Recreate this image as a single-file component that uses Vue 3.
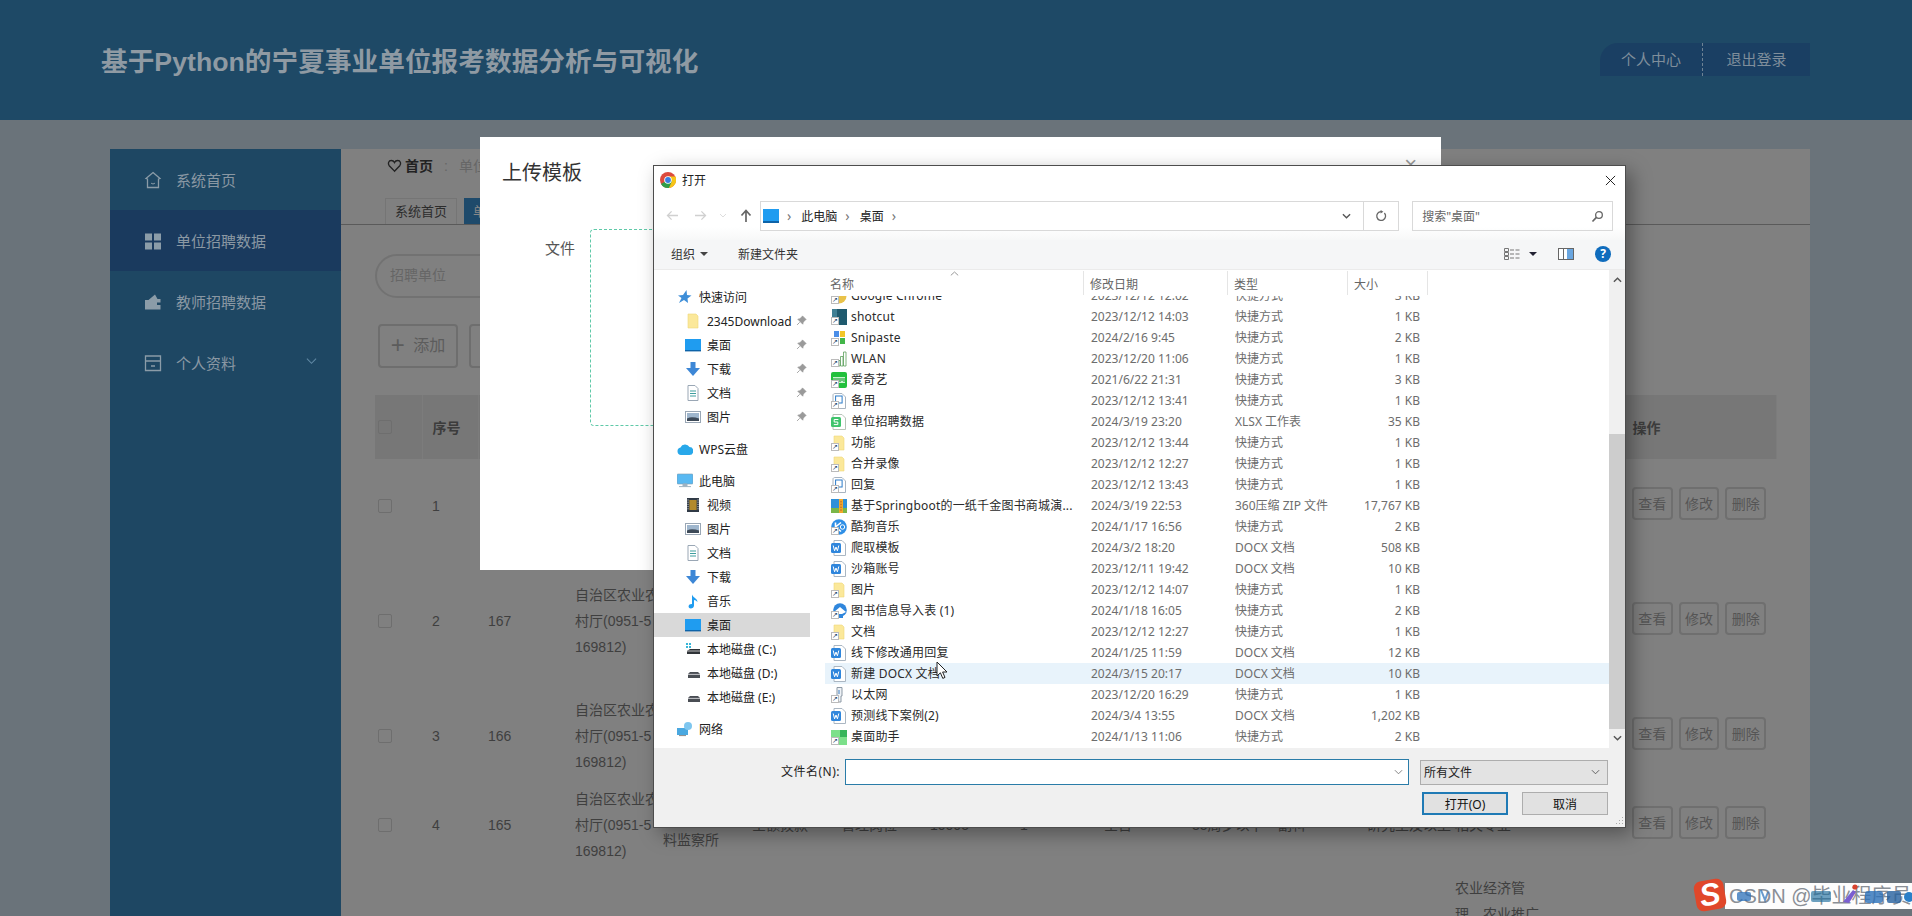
<template>
  <div class="page">
    <header class="top">
      <h1>基于Python的宁夏事业单位报考数据分析与可视化</h1>
      <div class="top-links">
        <span class="link first">个人中心</span>
        <span class="link">退出登录</span>
      </div>
    </header>

    <div class="main">
      <aside class="side">
        <div v-for="m in menu" :key="m.label" class="side-item" :class="{ active: m.active }">
          <svg class="side-icon" viewBox="0 0 18 18" v-html="sideIcons[m.icon]"></svg>
          <span>{{ m.label }}</span>
          <svg v-if="m.sub" class="side-arrow" viewBox="0 0 12 8"><path d="M1 1.5 6 6.5 11 1.5" fill="none" stroke="#5f87a3" stroke-width="1.2" /></svg>
        </div>
      </aside>

      <section class="content">
        <div class="crumb">
          <svg class="heart" viewBox="0 0 16 16"><path d="M8 14 2.4 8.2C.6 6.2 1.6 2.6 4.6 2.6 6.2 2.6 7.4 3.6 8 4.8 8.6 3.6 9.8 2.6 11.4 2.6c3 0 4 3.6 2.2 5.6Z" fill="none" stroke="#222" stroke-width="1.5" /></svg>
          <b>首页</b>
          <span class="crumb-sep">:</span>
          <span class="crumb-now">单位招聘数据</span>
        </div>
        <div class="tabs">
          <span class="tab">系统首页</span>
          <span class="tab on">单位招聘数据</span>
        </div>
        <div class="search"><span>招聘单位</span></div>
        <div class="tools">
          <button class="tool"><i>+</i> 添加</button>
          <button class="tool"></button>
        </div>

        <table class="grid">
          <colgroup>
            <col v-for="(w, i) in colWidths" :key="i" :style="{ width: w + 'px' }" />
          </colgroup>
          <thead>
            <tr>
              <th class="cb-cell"><span class="cb"></span></th>
              <th v-for="(h, i) in heads" :key="i">{{ h }}</th>
            </tr>
          </thead>
          <tbody>
            <tr v-for="r in rows" :key="r.key" :style="{ height: r.h + 'px' }" :class="r.cls">
              <td class="cb-cell"><span v-if="r.no" class="cb"></span></td>
              <td>{{ r.no }}</td>
              <td>{{ r.id }}</td>
              <td><span v-for="l in r.dept" :key="l" class="ln">{{ l }}</span></td>
              <td class="unit-cell"><span v-for="l in r.unit" :key="l" class="ln">{{ l }}</span></td>
              <td v-for="(c, i) in r.cells" :key="i"><span v-for="l in c.split('|')" :key="l" class="ln">{{ l }}</span></td>
              <td>
                <div v-if="r.no" class="ops">
                  <button>查看</button><button>修改</button><button>删除</button>
                </div>
              </td>
            </tr>
          </tbody>
        </table>
      </section>
    </div>

    <!-- page upload dialog -->
    <div class="upload">
      <h3>上传模板</h3>
      <span class="upload-x">×</span>
      <div class="upload-form">
        <label>文件</label>
        <div class="drop"></div>
      </div>
    </div>

    <!-- windows file picker -->
    <div class="picker">
      <div class="p-title">
        <svg class="chrome" viewBox="0 0 16 16">
          <circle cx="8" cy="8" r="8" fill="#dd4b3e" />
          <path d="M8 8 1 12A8 8 0 0 0 9 15.9L12.5 9Z" fill="#2f9e48" />
          <path d="M8 4.4h7.4A8 8 0 0 1 9 15.9L12 9Z" fill="#f5c518" />
          <circle cx="8" cy="8" r="3.8" fill="#fff" />
          <circle cx="8" cy="8" r="2.9" fill="#3a7de0" />
        </svg>
        <span>打开</span>
        <svg class="p-close" viewBox="0 0 12 12"><path d="M1 1 11 11M11 1 1 11" stroke="#111" stroke-width="1" /></svg>
      </div>

      <div class="p-addr">
        <svg class="nav-btn" viewBox="0 0 14 12"><path d="M13 6H2M6 1.5 1.5 6 6 10.5" fill="none" stroke="#d0d0d0" stroke-width="1.4" /></svg>
        <svg class="nav-btn" viewBox="0 0 14 12"><path d="M1 6H12M8 1.5 12.5 6 8 10.5" fill="none" stroke="#d0d0d0" stroke-width="1.4" /></svg>
        <svg class="nav-drop" viewBox="0 0 8 5"><path d="M1 1 4 4 7 1" fill="none" stroke="#ddd" /></svg>
        <svg class="nav-up" viewBox="0 0 12 14"><path d="M6 13V2M1.5 6.5 6 1.5 10.5 6.5" fill="none" stroke="#666" stroke-width="1.7" /></svg>
        <div class="addr-box">
          <span class="addr-pc"></span>
          <i class="chev">›</i><span>此电脑</span><i class="chev">›</i><span>桌面</span><i class="chev">›</i>
          <svg class="addr-down" viewBox="0 0 10 6"><path d="M1 1 5 5 9 1" fill="none" stroke="#555" stroke-width="1.5" /></svg>
          <span class="addr-refresh">
            <svg viewBox="0 0 12 12"><path d="M9.4 3A4.4 4.4 0 1 1 6 1.6" fill="none" stroke="#666" stroke-width="1.3" /><path d="M5.6 0 8.4 1.7 5.6 3.4Z" fill="#666" /></svg>
          </span>
        </div>
        <div class="search-box">
          <span>搜索"桌面"</span>
          <svg viewBox="0 0 14 14"><circle cx="8.6" cy="5.4" r="3.6" fill="none" stroke="#666" stroke-width="1.4" /><path d="M5.8 8 1.6 12.4" stroke="#666" stroke-width="1.8" /></svg>
        </div>
      </div>

      <div class="p-bar">
        <span>组织</span><i class="tri"></i>
        <span class="new-dir">新建文件夹</span>
        <svg class="view-ic" viewBox="0 0 16 12"><path d="M.5.5h4v3h-4zM.5 4.5h4v3h-4zM.5 8.5h4v3h-4z" fill="none" stroke="#777" /><path d="M6 2h4M11.5 2h4M6 6h4M11.5 6h4M6 10h4M11.5 10h4" stroke="#777" /></svg>
        <i class="tri dark"></i>
        <svg class="pane-ic" viewBox="0 0 16 12"><rect x=".5" y=".5" width="15" height="11" fill="#fff" stroke="#666" /><rect x="9" y="1" width="6" height="10" fill="#6aa6e0" /><path d="M5.5 1v10" stroke="#666" /></svg>
        <span class="help">?</span>
      </div>

      <div class="p-body">
        <nav class="p-nav">
          <div
            v-for="n in navItems"
            :key="n.key"
            class="nav-row"
            :class="{ group: n.group, sel: n.sel, gap: n.gap }"
          >
            <svg class="fi" viewBox="0 0 16 16" v-html="fileIcons[n.icon]"></svg>
            <span>{{ n.label }}</span>
            <svg v-if="n.pin" class="pin" viewBox="0 0 12 12"><path d="M7 1 11 5 9.6 5.6 7.6 8.4 7.4 10 2 4.6 3.6 4.4 6.4 2.4ZM4 8 1.2 10.8" fill="#9a9a9a" stroke="#9a9a9a" /></svg>
          </div>
        </nav>

        <div class="p-list">
          <div class="l-head">
            <span>名称</span><span>修改日期</span><span>类型</span><span>大小</span>
            <svg class="sort" viewBox="0 0 9 5"><path d="M.8 4.4 4.5 1 8.2 4.4" fill="none" stroke="#999" /></svg>
          </div>
          <div class="l-rows">
            <div v-for="f in files" :key="f.name" class="l-row" :class="{ hover: f.hover }">
              <span class="l-name">
                <span class="ic-wrap">
                  <svg class="fi" viewBox="0 0 16 16" v-html="fileIcons[f.icon]"></svg>
                  <i v-if="f.link" class="lnk">↗</i>
                </span>
                <span class="nm">{{ f.name }}</span>
              </span>
              <span>{{ f.date }}</span>
              <span>{{ f.type }}</span>
              <span class="sz">{{ f.size }}</span>
            </div>
          </div>
          <svg class="cursor" viewBox="0 0 12 19"><path d="M1 1V15L4.4 11.8 6.8 17.4 9 16.4 6.6 11H11Z" fill="#fff" stroke="#222" /></svg>
        </div>

        <div class="p-scroll">
          <svg viewBox="0 0 10 6"><path d="M1 5 5 1 9 5" fill="none" stroke="#555" stroke-width="1.6" /></svg>
          <div class="thumb"></div>
          <svg viewBox="0 0 10 6"><path d="M1 1 5 5 9 1" fill="none" stroke="#555" stroke-width="1.6" /></svg>
        </div>
      </div>

      <div class="p-foot">
        <div class="foot-row">
          <label>文件名(N):</label>
          <div class="name-input">
            <svg viewBox="0 0 10 6"><path d="M1 1 5 5 9 1" fill="none" stroke="#777" /></svg>
          </div>
          <div class="type-select">
            <span>所有文件</span>
            <svg viewBox="0 0 10 6"><path d="M1 1 5 5 9 1" fill="none" stroke="#555" /></svg>
          </div>
        </div>
        <div class="foot-btns">
          <button class="primary">打开(O)</button>
          <button>取消</button>
        </div>
        <svg class="grip" viewBox="0 0 10 10"><path d="M8 1h1v1H8zM5 4h1v1H5zM8 4h1v1H8zM2 7h1v1H2zM5 7h1v1H5zM8 7h1v1H8z" fill="#aaa" /></svg>
      </div>
    </div>

    <!-- video watermark and IME bar -->
    <div class="mark">
      <span class="s-logo">S</span>
      <div class="mark-band">
        <span class="mark-text">CSDN @毕业程序员</span>
        <svg class="mark-ime" viewBox="0 0 187 26">
          <rect x="12" y="9" width="14" height="9" rx="2" fill="#2a6fb8" opacity=".75" />
          <path d="M36 7 40 17 43 9" fill="none" stroke="#2a6fb8" stroke-width="2" opacity=".7" />
          <rect x="86" y="8" width="20" height="11" rx="2" fill="#1f6f9e" opacity=".65" />
          <path d="M118 19 128 7 131 9 124 20Z" fill="#7a5fd0" />
          <circle cx="130" cy="4" r="2.6" fill="#d8432f" />
          <rect x="140" y="8" width="18" height="12" rx="3" fill="#2a6fb8" opacity=".8" />
          <rect x="162" y="8" width="14" height="12" rx="2" fill="#245f9e" opacity=".8" />
          <circle cx="184" cy="14" r="5" fill="#2a7fc8" />
        </svg>
      </div>
    </div>
  </div>
</template>

<script setup>
// everything behind the dialogs is coloured as it looks under the grey modal mask
const menu = [
  { label: '系统首页', icon: 'home' },
  { label: '单位招聘数据', icon: 'grid', active: true },
  { label: '教师招聘数据', icon: 'case' },
  { label: '个人资料', icon: 'card', sub: true },
]

const sideIcons = {
  home: '<path d="M9 1.5 16 7.5 14.5 8V16.5H3.5V8L2 7.5Z" fill="none" stroke="#8b9ca8" stroke-width="1.3"/><path d="M7 12c1 1.2 3 1.2 4 0" fill="none" stroke="#8b9ca8"/>',
  grid: '<path d="M1 1.5h7v7H1zM10 1.5h7v7h-7zM1 10.5h7v7H1zM10 10.5h7v7h-7z" fill="#8b9ca8"/>',
  case: '<path d="M1 7h3.5L11 1.5 13.5 6 16.5 6V9.5H13V12H16.5V16.5H1Z" fill="#8b9ca8"/>',
  card: '<path d="M1.5 2H16.5V16.5H1.5ZM1.5 7H16.5M7 12H11" fill="none" stroke="#8b9ca8" stroke-width="1.3"/>',
}

const colWidths = [47, 56, 87, 88, 89, 89, 89, 90, 84, 88, 86, 89, 88, 88, 89, 154]
// only the visible heads are named, the rest sit under the dialogs
const heads = ['序号', '', '', '', '', '', '', '', '', '', '', '', '', '', '操作']

const rows = [
  { key: 1, no: 1, id: '', h: 86, cls: 'first', dept: [], unit: [], cells: [] },
  { key: 2, no: 2, id: 167, h: 152, dept: ['自治区农业农', '村厅(0951-5', '169812)'], unit: [], cells: [] },
  { key: 3, no: 3, id: 166, h: 78, dept: ['自治区农业农', '村厅(0951-5', '169812)'], unit: [], cells: [] },
  {
    key: 4,
    no: 4,
    id: 165,
    h: 100,
    dept: ['自治区农业农', '村厅(0951-5', '169812)'],
    unit: ['', '\u00a0', '料监察所'],
    cells: ['全额拨款', '管理岗位', '10005', '1', '全日', '35周岁以下', '副科', '研究生及以上', '相关专业'],
  },
  {
    key: 5,
    no: '',
    id: '',
    h: 180,
    cls: 'tall',
    dept: [],
    unit: [],
    cells: ['', '', '', '', '', '', '', '', '农业经济管|理、农业推广'],
  },
]
rows.forEach((r) => {
  while (r.cells.length < 10) r.cells.push('')
})

const fileIcons = {
  folder: '<path d="M3 1H11L13 3V15H3Z" fill="#fbe89a" stroke="#eed67a" stroke-width=".6"/>',
  desk: '<rect x="0" y="2" width="16" height="12" fill="#1f9cf0"/><path d="M0 13h16v1.4H0z" fill="#0d63a8"/>',
  down: '<path d="M5.5 1H10.5V7H15L8 15 1 7H5.5Z" fill="#3d87d6"/>',
  doc: '<path d="M3 .5H10L13 3.5V15.5H3Z" fill="#fff" stroke="#9aa7b5"/><path d="M5 6h6M5 8.5h6M5 11h6" stroke="#3e9e9e"/>',
  pic: '<rect x=".5" y="2.5" width="15" height="11" fill="#fff" stroke="#9aa7b5"/><rect x="2" y="4" width="12" height="8" fill="#9fb6cd"/><path d="M2 9.5c4-2 8-1 12 0V12H2Z" fill="#3e4a58"/>',
  star: '<path d="M9.5 1 10 6 14.5 6.5 10.5 9.5 11 14 7 11 2 14 4.5 9 1 6.5 6 6Z" fill="#3e8ed8"/>',
  cloud: '<path d="M4 14A3.8 3.8 0 0 1 3.5 6.5 5 5 0 0 1 12.5 6 4 4 0 0 1 12 14Z" fill="#28a8ea"/>',
  pc: '<rect x="0" y="1" width="16" height="10" rx="1" fill="#59b9f2" stroke="#7c9bb0" stroke-width=".6"/><path d="M6 11h4v2H6zM2 13.6h12" fill="#9fb3c2" stroke="#9fb3c2"/>',
  video: '<rect x="2" y="1" width="12" height="14" fill="#303a46"/><rect x="4.4" y="3" width="7.2" height="10" fill="#b28a2c"/><path d="M3 2.5v11M13 2.5v11" stroke="#ddd" stroke-dasharray="1 1.2"/>',
  music: '<path d="M7 1.5C8.4 5 12.5 5.4 12.5 9 11.4 7.8 10.2 7.2 9 7V12.5C9 14.4 7.4 15.4 5.8 15.4 4.2 15.4 3.4 14.4 3.6 13.2 3.8 11.8 5.6 10.8 7 11.2Z" fill="#1f9cf0"/>',
  cdrive: '<path d="M1 2h2v2H1zM4 2h2v2H4zM1 5h2v2H1zM4 5h2v2H4z" fill="#38b6d8"/><path d="M2 10 5 8H15V13H2Z" fill="#2f3338"/><path d="M2 10H15" stroke="#bbb"/>',
  drive: '<path d="M3 9 5 7H13L15 9V13H3Z" fill="#4a4e54"/><path d="M3 9.4H15" stroke="#c7c9cc"/>',
  net: '<rect x="0" y="7" width="11" height="7" fill="#4aa8e0"/><path d="M2 14.6h7" stroke="#888"/><circle cx="11" cy="5" r="4" fill="#7ec6ef"/>',
  chrome: '<circle cx="8" cy="8" r="7.5" fill="#e9c24a"/>',
  dark: '<rect x="1" y="0" width="15" height="16" fill="#1f5a6e"/><rect x="1" y="0" width="5" height="10" fill="#3f7f94"/>',
  snip: '<rect x="3" y="1" width="5" height="6" fill="#4b8ee8"/><rect x="9" y="1" width="5" height="6" fill="#f3c627"/><rect x="9" y="8" width="5" height="6" fill="#43b649"/><rect x="3" y="8" width="5" height="6" fill="#d9d9d9"/>',
  wlan: '<path d="M6.5 9.5h2.5V15H6.5zM9.5 5.5H12V15H9.5zM12.5 1H15V15H12.5z" fill="#fff" stroke="#5aa05a" stroke-width=".8"/>',
  iqiyi: '<rect x="0" y="0" width="16" height="16" rx="2" fill="#22c03c"/><path d="M2 5h12v6H2z" fill="#c8f5cf"/><path d="M3 6v3M5 6v4M7 6v3M9 6v4M11 6v3M13 6v4" stroke="#0c8f24"/>',
  blank: '<path d="M2 2 C2 1 3 .5 4 .5H11L14.5 4V15.5H2Z" fill="#fff" stroke="#a8b4c0"/><rect x="4.6" y="3" width="6.5" height="7" fill="#fff" stroke="#2a7ac8"/>',
  sheet: '<path d="M2 .5H11L14.5 4V15.5H2Z" fill="#fff" stroke="#b8c4b8"/><rect x="0" y="3" width="10" height="10" rx="1.5" fill="#3fc46c"/><path d="M7.4 5.5H3.2V8H6.8V10.6H2.8" fill="none" stroke="#fff"/>',
  zip: '<rect x="0" y="1" width="16" height="14" fill="#2e90d8"/><rect x="0" y="10" width="16" height="5" fill="#7ab648"/><rect x="8" y="1" width="4" height="14" fill="#f3a82a"/><path d="M10 3v10" stroke="#a53" stroke-dasharray="1.4 1.4"/>',
  kugou: '<circle cx="8" cy="8" r="7.8" fill="#2f8fe6"/><path d="M4.5 3.5V12.5M4.5 8 10 3.5M4.5 8 10 12.5" stroke="#fff" stroke-width="1.6" fill="none"/><circle cx="11.5" cy="8" r="2.2" fill="none" stroke="#fff"/>',
  word: '<path d="M3 .5H11L14.5 4V15.5H3Z" fill="#fff" stroke="#aab6c2"/><rect x="0" y="3" width="10" height="10" rx="1.5" fill="#2f86dc"/><path d="M2.2 5.5 3.6 10.8 5 7 6.4 10.8 7.8 5.5" fill="none" stroke="#fff"/>',
  book: '<circle cx="9" cy="7" r="6.8" fill="#2f86dc"/><path d="M3 15V9L9 4 15 9" fill="#fff"/><path d="M6 15V11H12V15Z" fill="#2f86dc"/>',
  lan: '<path d="M6 .5H11V9H10V15H7V9H6Z" fill="#eef2f6" stroke="#8d99a5"/><path d="M8 3v4" stroke="#3e7fc0"/>',
  helper: '<rect x="0" y="1" width="16" height="15" fill="#7ce08a"/><rect x="9" y="1" width="7" height="7" fill="#37b55a"/><rect x="0" y="8" width="7" height="8" fill="#b8f0c0"/>',
}

const navItems = [
  { key: 'q', label: '快速访问', icon: 'star', group: true },
  { key: 'q1', label: '2345Download', icon: 'folder', pin: true },
  { key: 'q2', label: '桌面', icon: 'desk', pin: true },
  { key: 'q3', label: '下载', icon: 'down', pin: true },
  { key: 'q4', label: '文档', icon: 'doc', pin: true },
  { key: 'q5', label: '图片', icon: 'pic', pin: true },
  { key: 'w', label: 'WPS云盘', icon: 'cloud', group: true, gap: true },
  { key: 'p', label: '此电脑', icon: 'pc', group: true, gap: true },
  { key: 'p1', label: '视频', icon: 'video' },
  { key: 'p2', label: '图片', icon: 'pic' },
  { key: 'p3', label: '文档', icon: 'doc' },
  { key: 'p4', label: '下载', icon: 'down' },
  { key: 'p5', label: '音乐', icon: 'music' },
  { key: 'p6', label: '桌面', icon: 'desk', sel: true },
  { key: 'c', label: '本地磁盘 (C:)', icon: 'cdrive' },
  { key: 'd', label: '本地磁盘 (D:)', icon: 'drive' },
  { key: 'e', label: '本地磁盘 (E:)', icon: 'drive' },
  { key: 'n', label: '网络', icon: 'net', group: true, gap: true },
]

const lnk = '快捷方式'
const files = [
  { name: 'Google Chrome', icon: 'chrome', link: true, date: '2023/12/12 12:02', type: lnk, size: '3 KB' },
  { name: 'shotcut', icon: 'dark', link: true, date: '2023/12/12 14:03', type: lnk, size: '1 KB' },
  { name: 'Snipaste', icon: 'snip', link: true, date: '2024/2/16 9:45', type: lnk, size: '2 KB' },
  { name: 'WLAN', icon: 'wlan', link: true, date: '2023/12/20 11:06', type: lnk, size: '1 KB' },
  { name: '爱奇艺', icon: 'iqiyi', link: true, date: '2021/6/22 21:31', type: lnk, size: '3 KB' },
  { name: '备用', icon: 'blank', link: true, date: '2023/12/12 13:41', type: lnk, size: '1 KB' },
  { name: '单位招聘数据', icon: 'sheet', date: '2024/3/19 23:20', type: 'XLSX 工作表', size: '35 KB' },
  { name: '功能', icon: 'folder', link: true, date: '2023/12/12 13:44', type: lnk, size: '1 KB' },
  { name: '合并录像', icon: 'folder', link: true, date: '2023/12/12 12:27', type: lnk, size: '1 KB' },
  { name: '回复', icon: 'blank', link: true, date: '2023/12/12 13:43', type: lnk, size: '1 KB' },
  { name: '基于Springboot的一纸千金图书商城演...', icon: 'zip', date: '2024/3/19 22:53', type: '360压缩 ZIP 文件', size: '17,767 KB' },
  { name: '酷狗音乐', icon: 'kugou', link: true, date: '2024/1/17 16:56', type: lnk, size: '2 KB' },
  { name: '爬取模板', icon: 'word', date: '2024/3/2 18:20', type: 'DOCX 文档', size: '508 KB' },
  { name: '沙箱账号', icon: 'word', date: '2023/12/11 19:42', type: 'DOCX 文档', size: '10 KB' },
  { name: '图片', icon: 'folder', link: true, date: '2023/12/12 14:07', type: lnk, size: '1 KB' },
  { name: '图书信息导入表 (1)', icon: 'book', link: true, date: '2024/1/18 16:05', type: lnk, size: '2 KB' },
  { name: '文档', icon: 'folder', link: true, date: '2023/12/12 12:27', type: lnk, size: '1 KB' },
  { name: '线下修改通用回复', icon: 'word', date: '2024/1/25 11:59', type: 'DOCX 文档', size: '12 KB' },
  { name: '新建 DOCX 文档', icon: 'word', date: '2024/3/15 20:17', type: 'DOCX 文档', size: '10 KB', hover: true },
  { name: '以太网', icon: 'lan', link: true, date: '2023/12/20 16:29', type: lnk, size: '1 KB' },
  { name: '预测线下案例(2)', icon: 'word', date: '2024/3/4 13:55', type: 'DOCX 文档', size: '1,202 KB' },
  { name: '桌面助手', icon: 'helper', link: true, date: '2024/1/13 11:06', type: lnk, size: '2 KB' },
]
</script>

<style scoped>
.page {
  position: relative;
  height: 916px;
  overflow: hidden;
  background: #6a737a;
  font-family: "Liberation Sans", "Noto Sans CJK SC", sans-serif;
  color: #3f3f3f;
}

.top {
  height: 120px;
  background: #1e4966;
  display: flex;
  align-items: center;
  justify-content: space-between;
  padding: 0 102px 0 101px;
}

.top h1 {
  margin: 0 0 2px;
  font-size: 26.7px;
  font-weight: 700;
  color: #8f9aa3;
}

.top-links {
  display: flex;
  height: 33px;
  margin-top: -1px;
}

.link {
  width: 107px;
  background: #1a3f63;
  color: #7f8e9b;
  font-size: 15px;
  line-height: 33px;
  text-align: center;
}

.link.first {
  width: 103px;
  border-top-left-radius: 18px;
  border-right: 1px dashed #6d8294;
  box-sizing: border-box;
}

.main {
  display: flex;
  height: 796px;
  padding: 29px 102px 0 110px;
  box-sizing: border-box;
}

.side {
  width: 231px;
  background: #1e4763;
  flex-shrink: 0;
}

.side-item {
  height: 61px;
  display: flex;
  align-items: center;
  padding: 0 24px 0 34px;
  color: #8a98a3;
  font-size: 15px;
  gap: 14px;
}

.side-item.active {
  background: #1a3a5e;
}

.side-icon {
  width: 18px;
  height: 18px;
}

.side-arrow {
  width: 11px;
  height: 8px;
  margin-left: auto;
  margin-top: -4px;
}

.content {
  flex: 1;
  background: #808080;
  min-width: 0;
}

.crumb {
  height: 49px;
  padding: 7px 0 0 46px;
  box-sizing: border-box;
  display: flex;
  align-items: flex-start;
  font-size: 14px;
  line-height: 20px;
  color: #222;
}

.heart {
  width: 15px;
  height: 15px;
  margin: 2px 3px 0 0;
}

.crumb-sep {
  margin: 0 11px;
  color: #666;
}

.crumb-now {
  color: #666;
}

.tabs {
  height: 27px;
  border-bottom: 1px solid #5a5a5a;
  padding-left: 44px;
  display: flex;
  gap: 7px;
  box-sizing: border-box;
}

.tab {
  width: 72px;
  height: 26px;
  border: 1px solid #757575;
  border-bottom: 0;
  box-sizing: border-box;
  font-size: 13px;
  line-height: 26px;
  text-align: center;
  color: #2c2c2c;
}

.tab.on {
  width: 110px;
  background: #1e4a6b;
  border-color: #1e4a6b;
  color: #888;
  text-align: left;
  padding-left: 8px;
}

.search {
  margin: 29px 0 0 34px;
  width: 300px;
  height: 44px;
  border: 2px solid #727272;
  border-radius: 24px;
  box-sizing: border-box;
  padding-left: 13px;
  font-size: 14px;
  line-height: 38px;
  color: #666;
}

.tools {
  margin: 26px 0 0 37px;
  display: flex;
  gap: 11px;
}

.tool {
  height: 44px;
  width: 80px;
  background: none;
  border: 2px solid #6e6e6e;
  border-radius: 4px;
  font: 16px "Liberation Sans", "Noto Sans CJK SC", sans-serif;
  color: #5c5c5c;
  padding: 0 0 4px;
}

.tool i {
  font-style: normal;
  font-size: 24px;
  font-weight: 300;
  line-height: 20px;
  vertical-align: -2px;
  margin-right: 4px;
}

.grid {
  margin: 27px 0 0 34px;
  width: 1401px;
  table-layout: fixed;
  border-collapse: collapse;
  font-size: 14px;
}

.grid th {
  height: 64px;
  background: #777;
  padding: 0 10px;
  text-align: left;
  color: #3c3c3c;
  font-size: 14px;
  border-right: 1px solid #7c7c7c;
}

.grid td {
  padding: 0 10px;
  line-height: 26px;
  word-break: break-all;
  vertical-align: middle;
}

.grid .unit-cell {
  vertical-align: top;
}

.grid .first td {
  padding-top: 8px;
}

.grid .tall td {
  vertical-align: top;
}

.grid .cb-cell {
  padding: 0 0 0 3px;
}

.cb {
  display: block;
  width: 14px;
  height: 14px;
  border: 1px solid #6e6e6e;
  border-radius: 2px;
  box-sizing: border-box;
}

.ln {
  display: block;
  height: 26px;
  white-space: nowrap;
}

.ops {
  display: flex;
  gap: 6px;
  margin-top: -6px;
}

.ops button {
  width: 43px;
  height: 33px;
  padding: 0;
  background: none;
  border: 2px solid #6f6f6f;
  border-radius: 4px;
  font: 14px "Liberation Sans", "Noto Sans CJK SC", sans-serif;
  color: #555;
}

/* upload dialog */
.upload {
  position: absolute;
  left: 480px;
  top: 137px;
  width: 961px;
  height: 433px;
  background: #fff;
  padding: 24px 22px;
  box-sizing: border-box;
}

.upload h3 {
  margin: 0;
  font-size: 20px;
  font-weight: 400;
  line-height: 24px;
  color: #333;
}

.upload-x {
  position: absolute;
  right: 24px;
  top: 15px;
  font-size: 22px;
  color: #999;
}

.upload-form {
  display: flex;
  margin-top: 44px;
}

.upload-form label {
  width: 73px;
  margin-right: 2px;
  text-align: right;
  padding-top: 8px;
  font-size: 15px;
  color: #555;
}

.drop {
  margin-left: 13px;
  width: 360px;
  height: 197px;
  border: 1px dashed #5fc9a8;
  border-radius: 4px;
  box-sizing: border-box;
}

/* file picker */
.picker {
  position: absolute;
  left: 653px;
  top: 165px;
  width: 973px;
  height: 663px;
  background: #fff;
  border: 1px solid #4d4d4d;
  box-sizing: border-box;
  box-shadow: 6px 6px 18px rgba(0, 0, 0, 0.35);
  font-family: "Noto Sans", "Noto Sans CJK SC", sans-serif;
  font-size: 12px;
  color: #222;
  display: flex;
  flex-direction: column;
}

.p-title {
  height: 30px;
  flex-shrink: 0;
  display: flex;
  align-items: center;
  padding: 0 9px 2px 6px;
  box-sizing: border-box;
}

.chrome {
  width: 16px;
  height: 16px;
  margin-right: 6px;
}

.p-close {
  width: 11px;
  height: 11px;
  margin-left: auto;
}

.p-addr {
  height: 44px;
  flex-shrink: 0;
  display: flex;
  align-items: flex-start;
  padding: 5px 12px 0 12px;
  box-sizing: border-box;
  background: linear-gradient(#fff 70%, #f7f8f8);
}

.nav-btn {
  width: 13px;
  height: 11px;
  margin: 9px 15px 0 0;
}

.nav-drop {
  width: 8px;
  height: 5px;
  margin: 12px 13px 0 -3px;
}

.nav-up {
  width: 12px;
  height: 14px;
  margin: 8px 8px 0 0;
}

.addr-box {
  width: 640px;
  height: 30px;
  border: 1px solid #d9d9d9;
  box-sizing: border-box;
  display: flex;
  align-items: center;
  padding-left: 2px;
  background: #fff;
  color: #222;
}

.addr-pc {
  width: 16px;
  height: 12px;
  background: #1f9cf0;
  border-bottom: 2px solid #0d63a8;
}

.chev {
  font-style: normal;
  color: #777;
  font-size: 14px;
  line-height: 12px;
  margin: 0 10px 0 8px;
}

.addr-down {
  width: 9px;
  height: 6px;
  margin-left: auto;
  margin-right: 12px;
}

.addr-refresh {
  width: 34px;
  height: 28px;
  border-left: 1px solid #d9d9d9;
  display: flex;
  align-items: center;
  justify-content: center;
}

.addr-refresh svg {
  width: 12px;
  height: 12px;
}

.search-box {
  width: 201px;
  height: 30px;
  margin-left: 13px;
  border: 1px solid #d9d9d9;
  box-sizing: border-box;
  display: flex;
  align-items: center;
  justify-content: space-between;
  padding: 0 8px 0 9px;
  color: #666;
}

.search-box svg {
  width: 13px;
  height: 13px;
}

.p-bar {
  height: 30px;
  flex-shrink: 0;
  background: #f5f6f7;
  border-bottom: 1px solid #ebebeb;
  box-sizing: border-box;
  display: flex;
  align-items: center;
  padding: 0 14px 1px 17px;
  color: #333;
}

.tri {
  width: 0;
  height: 0;
  border-left: 4px solid transparent;
  border-right: 4px solid transparent;
  border-top: 4px solid #444;
  margin-left: 5px;
}

.new-dir {
  margin-left: 30px;
}

.view-ic {
  width: 16px;
  height: 12px;
  margin-left: auto;
}

.tri.dark {
  margin-left: 9px;
  border-top-color: #223;
}

.pane-ic {
  width: 16px;
  height: 12px;
  margin-left: 21px;
}

.help {
  width: 16px;
  height: 16px;
  margin-left: 21px;
  border-radius: 50%;
  background: #0f6cbd;
  color: #fff;
  font-size: 12px;
  font-weight: 700;
  line-height: 16px;
  text-align: center;
}

.p-body {
  flex: 1;
  min-height: 0;
  display: flex;
  overflow: hidden;
}

.p-nav {
  width: 171px;
  flex-shrink: 0;
  padding-top: 15px;
  box-sizing: border-box;
}

.nav-row {
  width: 156px;
  height: 24px;
  display: flex;
  align-items: center;
  padding-left: 31px;
  box-sizing: border-box;
  position: relative;
  gap: 6px;
}

.nav-row.group {
  padding-left: 23px;
}

.nav-row.gap {
  margin-top: 8px;
}

.nav-row.sel {
  background: #d9d9d9;
}

.nav-row .fi {
  width: 16px;
  height: 16px;
  flex-shrink: 0;
}

.pin {
  position: absolute;
  right: 3px;
  top: 6px;
  width: 11px;
  height: 11px;
}

.p-list {
  flex: 1;
  min-width: 0;
  position: relative;
  display: flex;
  flex-direction: column;
}

.l-head,
.l-row {
  display: grid;
  grid-template-columns: 259px 144px 120px 80px;
}

.l-head {
  height: 26px;
  flex-shrink: 0;
  position: relative;
  align-items: center;
  color: #666;
}

.l-head span {
  height: 24px;
  line-height: 28px;
  padding-left: 6px;
  border-right: 1px solid #e5e5e5;
}

.l-head span:first-child {
  padding-left: 5px;
}

.sort {
  position: absolute;
  left: 125px;
  top: 1px;
  width: 9px;
  height: 5px;
}

.l-rows {
  flex: 1;
  min-height: 0;
  overflow: hidden;
}

.l-row {
  height: 21px;
  line-height: 21px;
  color: #6d6d6d;
}

.l-row:first-child {
  margin-top: -11px;
}

.l-row.hover {
  background: #e8f3fb;
}

.l-row > span {
  padding-left: 7px;
  white-space: nowrap;
  overflow: hidden;
}

.l-row > .l-name {
  padding-left: 6px;
  display: flex;
  align-items: center;
  gap: 4px;
}

.ic-wrap {
  position: relative;
  width: 16px;
  height: 16px;
  flex-shrink: 0;
}

.ic-wrap .fi {
  display: block;
  width: 16px;
  height: 16px;
}

.lnk {
  position: absolute;
  left: 0;
  bottom: 0;
  width: 8px;
  height: 8px;
  background: #fff;
  border: 1px solid #bbb;
  box-sizing: border-box;
  color: #246;
  font: 7px/6px "DejaVu Sans", sans-serif;
  text-align: center;
}

.nm {
  color: #2a2a2a;
  letter-spacing: 0.2px;
}

.l-row > .sz {
  padding: 0 8px 0 0;
  text-align: right;
}

.cursor {
  position: absolute;
  left: 111px;
  top: 391px;
  width: 12px;
  height: 19px;
}

.p-scroll {
  width: 16px;
  flex-shrink: 0;
  background: #f0f0f0;
  display: flex;
  flex-direction: column;
  align-items: center;
  padding: 7px 0;
  box-sizing: border-box;
}

.p-scroll svg {
  width: 9px;
  height: 6px;
  flex-shrink: 0;
}

.thumb {
  width: 16px;
  height: 295px;
  background: #cdcdcd;
  margin: 151px 0 6px;
}

.p-foot {
  height: 79px;
  flex-shrink: 0;
  background: #f0f0f0;
  position: relative;
  padding: 11px 17px 0 0;
  box-sizing: border-box;
}

.foot-row {
  display: flex;
  justify-content: flex-end;
  align-items: center;
}

.foot-row label {
  letter-spacing: 0.5px;
  margin-bottom: 2px;
}

.name-input {
  width: 564px;
  height: 26px;
  margin-left: 5px;
  background: #fff;
  border: 1px solid #2a7ca8;
  box-sizing: border-box;
  display: flex;
  align-items: center;
  justify-content: flex-end;
  padding-right: 5px;
}

.name-input svg,
.type-select svg {
  width: 9px;
  height: 6px;
}

.type-select {
  width: 188px;
  height: 25px;
  margin-left: 11px;
  background: #e3e3e3;
  border: 1px solid #adadad;
  box-sizing: border-box;
  display: flex;
  align-items: center;
  justify-content: space-between;
  padding: 0 7px 0 3px;
}

.foot-btns {
  display: flex;
  justify-content: flex-end;
  gap: 14px;
  margin-top: 7px;
}

.foot-btns button {
  width: 86px;
  height: 23px;
  padding: 0;
  background: #e1e1e1;
  border: 1px solid #adadad;
  box-sizing: border-box;
  font: 12px "Noto Sans", "Noto Sans CJK SC", sans-serif;
  color: #111;
}

.foot-btns .primary {
  border: 2px solid #1f7ab5;
}

.grip {
  position: absolute;
  right: 1px;
  bottom: 1px;
  width: 10px;
  height: 10px;
}

/* bottom right watermark */
.mark {
  position: absolute;
  right: 0;
  bottom: 7px;
  width: 217px;
  height: 26px;
}

.mark-band {
  position: absolute;
  left: 30px;
  right: 0;
  top: 0;
  height: 26px;
  background: #fdfdfd;
  overflow: hidden;
}

.mark-text {
  margin-left: 4px;
  font-size: 20px;
  line-height: 26px;
  color: #8a8f96;
  white-space: nowrap;
}

.mark-ime {
  position: absolute;
  left: 0;
  top: 0;
  width: 187px;
  height: 26px;
}

.s-logo {
  position: absolute;
  left: 0;
  top: -3px;
  width: 30px;
  height: 30px;
  background: #e0472a;
  border-radius: 7px;
  transform: rotate(-10deg);
  color: #fff;
  font: italic 700 31px/30px "Liberation Sans", sans-serif;
  text-align: center;
  z-index: 1;
}
</style>
